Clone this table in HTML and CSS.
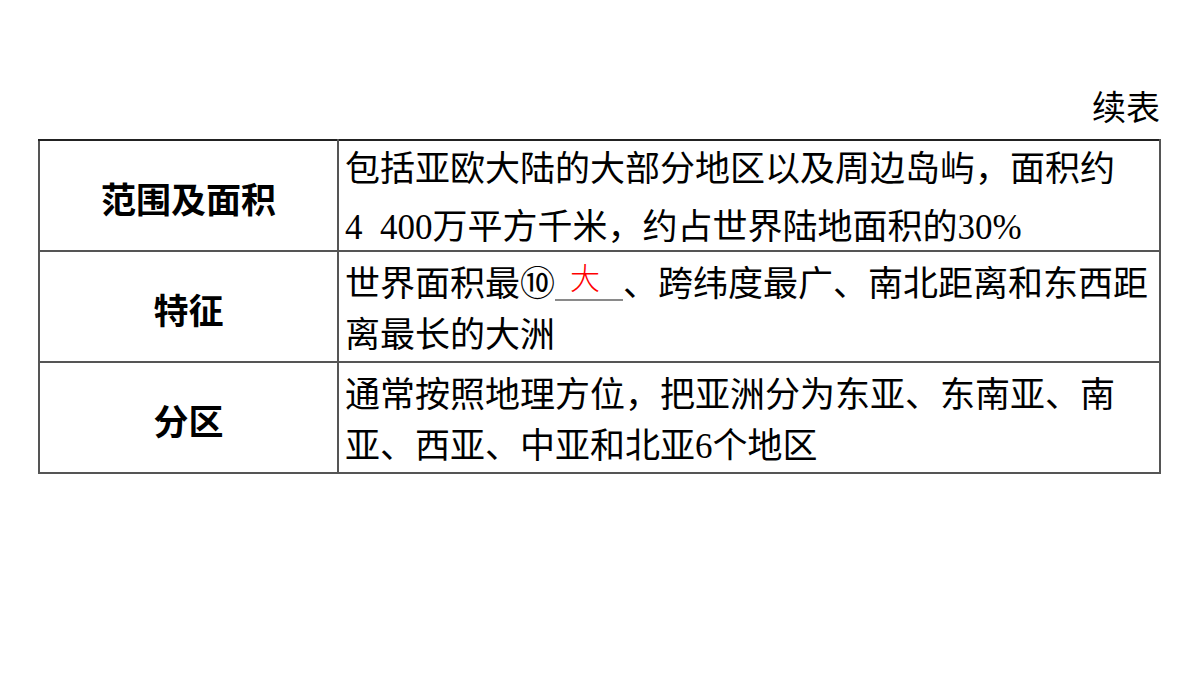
FILE: index.html
```html
<!DOCTYPE html>
<html lang="zh-CN">
<head>
<meta charset="utf-8">
<title>续表</title>
<link rel="stylesheet" href="styles.css">
</head>
<body>
<div class="page">
  <div class="caption">续表</div>
  <table class="info">
    <tr class="row row-first">
      <th class="label">范围及面积</th>
      <td class="content"><div class="cell-text">包括亚欧大陆的大部分地区以及周边岛屿，面积约<br><span class="num">4&nbsp;&nbsp;400</span>万平方千米，约占世界陆地面积的<span class="num">30%</span></div></td>
    </tr>
    <tr class="row">
      <th class="label">特征</th>
      <td class="content"><div class="cell-text">世界面积最⑩<span class="blank"><span class="answer">大</span></span>、跨纬度最广、南北距离和东西距<br>离最长的大洲</div></td>
    </tr>
    <tr class="row">
      <th class="label">分区</th>
      <td class="content"><div class="cell-text">通常按照地理方位，把亚洲分为东亚、东南亚、南<br>亚、西亚、中亚和北亚<span class="num">6</span>个地区</div></td>
    </tr>
  </table>
</div>
</body>
</html>
```
FILE: styles.css
```css
html, body {
  margin: 0;
  padding: 0;
  background: #ffffff;
}
body {
  font-family: "Liberation Serif", "Noto Sans CJK SC", serif;
  color: #000;
}
.page {
  padding-top: 80px;
  margin-left: 38px;
  width: 1123px;
}
.caption {
  font-family: "Noto Sans CJK SC", sans-serif;
  font-size: 34px;
  line-height: 51px;
  text-align: right;
  padding-right: 1px;
  margin-bottom: 8px;
}
.info {
  width: 1123px;
  border-collapse: collapse;
  table-layout: fixed;
}
.row {
  height: 111px;
}
.label, .content {
  border: 2px solid #555;
  padding: 0;
}
.info tr:first-child .label,
.info tr:first-child .content {
  border-top-color: #222;
}
.label {
  width: 297px;
  font-family: "Noto Sans CJK SC", sans-serif;
  font-weight: 700;
  font-size: 35px;
  text-align: center;
  vertical-align: middle;
  padding-top: 4px;
}
.content {
  font-size: 35px;
  vertical-align: top;
  text-align: left;
  padding: 0 0 0 6px;
  white-space: nowrap;
}
.cell-text {
  height: 102px;
  padding-top: 7px;
  line-height: 51px;
  overflow: visible;
}
.row-first .cell-text {
  padding-top: 0;
  height: 109px;
  line-height: 58px;
}
.num {
  font-family: "Liberation Serif", serif;
}
.blank {
  display: inline-block;
  width: 68px;
  height: 40px;
  line-height: 40px;
  border-bottom: 2px solid #8a8a8a;
  text-align: center;
  vertical-align: 4px;
}
.answer {
  color: #ff0000;
  font-family: "Noto Sans CJK SC", sans-serif;
  font-weight: 300;
  font-size: 30px;
  position: relative;
  top: -3px;
  left: -4px;
}
```
